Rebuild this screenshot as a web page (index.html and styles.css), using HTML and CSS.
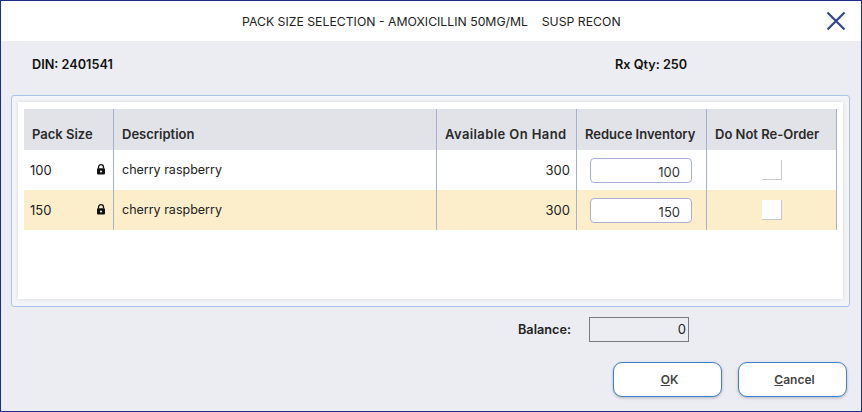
FILE: index.html
```html
<!DOCTYPE html>
<html lang="en">
<head>
    <meta charset="UTF-8">
    <title>Pack Size Selection</title>
    <link rel="stylesheet" href="styles.css">
</head>
<body>
    <div class="dialog">
        <div class="title-bar">
            <div class="title">PACK SIZE SELECTION - AMOXICILLIN 50MG/ML&nbsp;&nbsp;&nbsp;&nbsp;SUSP RECON</div>
            <svg class="close-icon" width="20" height="20" viewBox="0 0 20 20">
                <path d="M1.5 1.5L18.500 18.500M18.500 1.500L1.500 18.500" fill="none" stroke="#2f4590" stroke-width="2.200"/>
            </svg>
        </div>

        <div class="info-row">
            <div class="din">DIN: 2401541</div>
            <div class="rx-qty">Rx Qty: 250</div>
        </div>

        <div class="panel">
            <div class="panel-inner">
                <div class="grid">
                    <div class="cell head col-pack">Pack Size</div>
                    <div class="cell head col-desc">Description</div>
                    <div class="cell head col-avail">Available On Hand</div>
                    <div class="cell head col-reduce">Reduce Inventory</div>
                    <div class="cell head col-order">Do Not Re-Order</div>

                    <div class="cell col-pack pack-cell">
                        <span>100</span>
                        <svg class="lock" width="10" height="11" viewBox="0 0 10 11"><path d="M2.500 4.500V3.200a2.500 2.500 0 0 1 5 0V4.500" fill="none" stroke="#111" stroke-width="1.300"/><rect x="1" y="4.300" width="8" height="6.200" rx="1" fill="#111"/><circle cx="5" cy="7.400" r="1" fill="#fff"/></svg>
                    </div>
                    <div class="cell col-desc text-cell">cherry raspberry</div>
                    <div class="cell col-avail num">300</div>
                    <div class="cell col-reduce input-cell"><input class="qty" type="text" value="100"></div>
                    <div class="cell col-order check-cell"><span class="check"></span></div>

                    <div class="cell col-pack pack-cell hl">
                        <span>150</span>
                        <svg class="lock" width="10" height="11" viewBox="0 0 10 11"><path d="M2.500 4.500V3.200a2.500 2.500 0 0 1 5 0V4.500" fill="none" stroke="#111" stroke-width="1.300"/><rect x="1" y="4.300" width="8" height="6.200" rx="1" fill="#111"/><circle cx="5" cy="7.400" r="1" fill="#fff"/></svg>
                    </div>
                    <div class="cell col-desc text-cell hl">cherry raspberry</div>
                    <div class="cell col-avail num hl">300</div>
                    <div class="cell col-reduce input-cell hl"><input class="qty" type="text" value="150"></div>
                    <div class="cell col-order check-cell hl"><span class="check"></span></div>
                </div>
            </div>
        </div>

        <div class="balance-row">
            <label class="balance-label">Balance:</label>
            <div class="balance-value">0</div>
        </div>

        <div class="button-row">
            <button class="btn"><u>O</u>K</button>
            <button class="btn"><u>C</u>ancel</button>
        </div>
    </div>
</body>
</html>
```

FILE: styles.css
```css
html, body {
    margin: 0;
    padding: 0;
}
body {
    width: 862px;
    height: 412px;
    overflow: hidden;
    font-family: Inter, "Liberation Sans", sans-serif;
    font-size: 13px;
    color: #222;
}
.dialog {
    width: 862px;
    height: 412px;
    box-sizing: border-box;
    border: 1px solid #1b2f86;
    background: #ecedf2;
}
.title-bar {
    height: 40px;
    background: white;
    display: flex;
    align-items: center;
    justify-content: space-between;
    padding: 0 15px 0 241px;
}
.title {
    font-size: 12.250px;
    color: #222;
}
.close-icon {
    display: block;
}
.info-row {
    display: flex;
    height: 54px;
    align-items: center;
    font-size: 12.700px;
    font-weight: 600;
    color: #111;
    padding: 2px 0 10px 31px;
    box-sizing: border-box;
}
.din {
    width: 583px;
}
.panel {
    margin: 0 11px 0 10px;
    height: 212px;
    box-sizing: border-box;
    border: 1px solid #a9c4e6;
    border-radius: 3px;
    padding: 6px;
    background: #f3f4f8;
}
.panel-inner {
    height: 197px;
    background: white;
    padding: 7px 6px 0 6px;
    box-sizing: border-box;
    box-shadow: 0 0 4px rgba(0,0,0,0.12);
}
.grid {
    display: grid;
    grid-template-columns: 90px 323px 140px 130px 130px;
    grid-template-rows: 41px 40px 40px;
}
.cell {
    display: flex;
    align-items: center;
    padding: 0 6px 1px 8px;
    box-sizing: border-box;
    border-right: 1px solid #a8b0d2;
    min-width: 0;
}
.head {
    background: #e2e3e9;
    font-weight: 600;
    color: #2a2a2a;
    white-space: nowrap;
    padding-top: 9px;
}
.head.col-avail {
    letter-spacing: 0.400px;
}
.hl {
    background: #fdeecb;
}
.text-cell {
    font-size: 12.500px;
}
.pack-cell {
    justify-content: space-between;
    padding: 0 7px 1px 6px;
}
.num {
    justify-content: flex-end;
}
.input-cell {
    padding: 0 0 0 13px;
}
.qty {
    width: 102px;
    height: 25px;
    box-sizing: border-box;
    border: 1px solid #a8b0d2;
    border-radius: 4px;
    background: white;
    padding: 3px 11px 0 0;
    text-align: right;
    font-family: inherit;
    font-size: 13px;
    color: #333;
}
.check-cell {
    justify-content: center;
    padding: 0 0 0 1px;
}
.check {
    display: block;
    width: 20px;
    height: 20px;
    background: white;
    box-sizing: border-box;
    border-right: 1px solid #c8c8cc;
    border-bottom: 1px solid #c8c8cc;
}
.balance-row {
    display: flex;
    align-items: center;
    margin-top: 10px;
    height: 25px;
}
.balance-label {
    margin-left: 517px;
    width: 71px;
    font-size: 12.700px;
    font-weight: 600;
    color: #222;
}
.balance-value {
    width: 100px;
    height: 25px;
    box-sizing: border-box;
    border: 1px solid #7b7b7b;
    text-align: right;
    line-height: 23px;
    padding-right: 2px;
}
.button-row {
    display: flex;
    justify-content: flex-end;
    gap: 16px;
    margin-top: 20px;
    padding-right: 14px;
}
.btn {
    width: 109px;
    height: 35px;
    padding: 0 0 0 4px;
    background: white;
    border: 1px solid #3f7fc8;
    border-radius: 9px;
    box-shadow: 0 1px 3px rgba(0,0,0,0.25);
    font-family: inherit;
    font-size: 12px;
    font-weight: 600;
    color: #444;
}
```
